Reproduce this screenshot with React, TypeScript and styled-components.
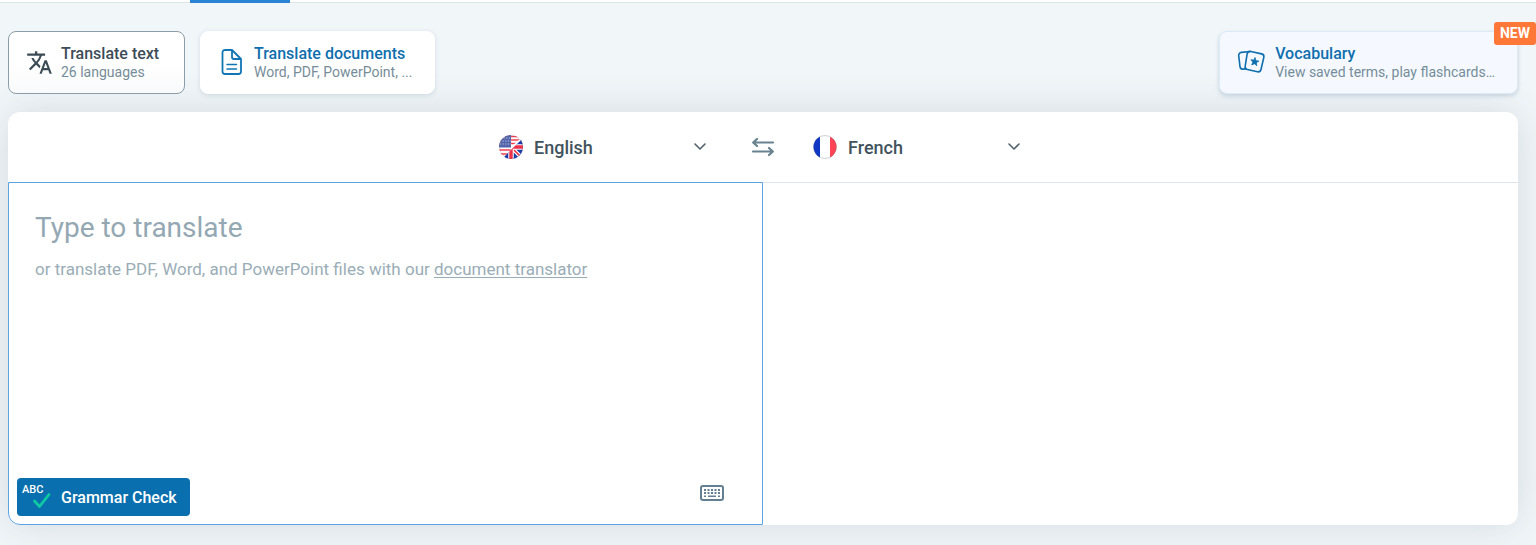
import React from "react";
import styled, { createGlobalStyle, css } from "styled-components";

const GlobalStyle = createGlobalStyle`
  *, *::before, *::after { box-sizing: border-box; }
  body {
    margin: 0;
    background: #f1f6f9;
    color: #3a4b54;
    font-family: Roboto, "Liberation Sans", sans-serif;
  }
  button, select, textarea { font: inherit; color: inherit; margin: 0; }
`;

const Page = styled.div`
  min-height: 100vh;
  overflow: hidden;
`;

const TopBar = styled.header`
  height: 3px;
  background: #fff;
  border-bottom: 1px solid #dde5e9;
  padding-left: 190px;
`;

const ActiveMark = styled.div`
  width: 100px;
  height: 3px;
  background: #2b83d6;
`;

const Main = styled.main`
  padding: 28px 18px 20px 8px;
`;

const Modes = styled.nav`
  position: relative;
  z-index: 1;
  display: flex;
  gap: 15px;
  margin-bottom: 18px;
`;

type Tone = "active" | "plain" | "tinted";

const ModeCard = styled.button<{ $tone: Tone }>`
  position: relative;
  display: flex;
  align-items: center;
  min-width: 177px;
  height: 63px;
  padding: 0 22px 0 17px;
  gap: 8px;
  border: 1px solid #fff;
  border-radius: 8px;
  background: #fff;
  text-align: left;
  cursor: pointer;
  box-shadow: 0 1px 5px rgba(60, 90, 110, 0.16);

  ${({ $tone }) =>
    $tone === "active" &&
    css`
      border-color: #8b9da8;
      background: linear-gradient(#fff 50%, #f9fafb);
      box-shadow: none;
    `}
  ${({ $tone }) =>
    $tone === "tinted" &&
    css`
      margin-left: auto;
      border-color: #dbeaf5;
      background: #f5f9ff;
      box-shadow: 0 2px 4px rgba(60, 100, 130, 0.22);
    `}
`;

const ModeText = styled.span`
  display: flex;
  flex-direction: column;
  padding-bottom: 1px;
`;

const ModeTitle = styled.span<{ $dark?: boolean }>`
  font-size: 16px;
  line-height: 20px;
  font-weight: 500;
  color: ${({ $dark }) => ($dark ? "#3d4c57" : "#0f6fae")};
`;

const ModeNote = styled.span`
  font-size: 14px;
  line-height: 17px;
  color: #768d99;
`;

const Badge = styled.span`
  position: absolute;
  top: -10px;
  right: -19px;
  padding: 0 6px;
  border-radius: 3px;
  background: #ff7838;
  color: #fff;
  font-size: 14px;
  line-height: 23px;
  font-weight: 700;
`;

const Panel = styled.section`
  border-radius: 12px;
  background: #fff;
  box-shadow: 0 0 40px rgba(50, 70, 80, 0.15);
`;

const LanguageBar = styled.div`
  display: flex;
  align-items: center;
  justify-content: center;
  height: 70px;
`;

const Picker = styled.label`
  position: relative;
  display: flex;
  align-items: center;
  gap: 11px;
  width: 242px;
  padding: 0 14px;
`;

const LanguageSelect = styled.select`
  flex: 1;
  min-width: 0;
  height: 40px;
  padding: 0;
  border: 0;
  outline: 0;
  appearance: none;
  background: transparent;
  font-size: 18px;
  font-weight: 500;
  color: #42535d;
  cursor: pointer;
`;

const Chevron = styled.svg`
  position: absolute;
  right: 20px;
  top: 50%;
  margin-top: -8px;
  pointer-events: none;
`;

const SwapButton = styled.button`
  display: flex;
  justify-content: center;
  width: 72px;
  padding: 0;
  border: 0;
  background: none;
  cursor: pointer;
`;

const Panes = styled.div`
  display: grid;
  grid-template-columns: 1fr 1fr;
  min-height: 343px;
`;

const SourcePane = styled.div`
  display: flex;
  flex-direction: column;
  padding: 24px 38px 8px 26px;
  border: 1px solid #5ba3e2;
  border-bottom-left-radius: 12px;
`;

const TargetPane = styled.output`
  border-top: 1px solid #dde5ea;
`;

const SourceInput = styled.textarea`
  display: block;
  width: 100%;
  height: 42px;
  padding: 0;
  border: 0;
  outline: 0;
  resize: none;
  overflow: hidden;
  background: none;
  font-size: 28px;
  line-height: 42px;

  &::placeholder { color: #94a8b3; opacity: 1; }
`;

const Hint = styled.p`
  margin: 8px 0 0;
  font-size: 17px;
  line-height: 25px;
  color: #9aadb6;
`;

const HintLink = styled.a`
  color: inherit;
  text-decoration: underline;
  text-underline-offset: 2px;
  text-decoration-thickness: 1px;
`;

const PaneFooter = styled.div`
  display: flex;
  align-items: flex-start;
  justify-content: space-between;
  margin: auto 0 0 -18px;
`;

const GrammarButton = styled.button`
  display: flex;
  align-items: center;
  gap: 8px;
  height: 38px;
  padding: 0 13px 0 5px;
  border: 0;
  border-radius: 4px;
  background: #0a6fae;
  color: #fff;
  font-size: 16px;
  font-weight: 500;
  cursor: pointer;
`;

const AbcMark = styled.span`
  display: flex;
  flex-direction: column;
  width: 31px;
  height: 26px;
  font-size: 11px;
  line-height: 12px;
  font-weight: 500;
  text-align: left;

  svg { align-self: flex-end; margin: -5px 2px 0 0; }
`;

const IconButton = styled.button`
  display: flex;
  padding: 7px 0;
  border: 0;
  background: none;
  cursor: pointer;
`;

const TranslateIcon = () => (
  <svg width="27" height="28" viewBox="0 0 24 25" fill="#3a4b54" aria-hidden="true">
    <path d="m12.87 15.07-2.54-2.51.03-.03A17.52 17.52 0 0 0 14.07 6H17V4h-7V2H8v2H1v1.99h11.17C11.5 7.92 10.44 9.75 9 11.35 8.07 10.32 7.3 9.19 6.69 8h-2c.73 1.63 1.73 3.17 2.98 4.56l-5.09 5.02L4 19l5-5 3.11 3.11.76-2.04zM18.5 10h-2L12 22h2l1.12-3h4.75L21 22h2l-4.5-12zm-2.62 7 1.62-4.33L19.12 17h-3.24z" />
  </svg>
);

const DocumentIcon = () => (
  <svg width="28" height="28" viewBox="0 0 28 28" fill="none" stroke="#1276b4" strokeWidth="1.8" strokeLinecap="round" strokeLinejoin="round" aria-hidden="true">
    <path d="M14 1H7a2.5 2.5 0 0 0-2.500 2.500v19A2.5 2.5 0 0 0 7 25h13.500a2.5 2.5 0 0 0 2.500-2.500V10L14 1v7a2 2 0 0 0 2 2h7" />
    <path d="M9 15.500h9.500M9 20h9.500" strokeWidth="1.500" />
  </svg>
);

const CardsIcon = () => (
  <svg width="30" height="28" viewBox="0 0 30 28" fill="none" stroke="#0f6fae" strokeWidth="1.6" strokeLinejoin="round" strokeLinecap="round" aria-hidden="true">
    <path d="M13.800 2.500 24.600 4.900a3 3 0 0 1 2.200 3.600l-2.800 12a3 3 0 0 1-3.600 2.200l-10-2.200a3 3 0 0 1-2.200-3.600l2-12.200a3 3 0 0 1 3.600-2.200z" />
    <path d="M13.600 2.500 4.300 3.400a2.900 2.900 0 0 0-2.600 3.200l1.300 11a2.900 2.900 0 0 0 3.200 2.500l2.900-.2" />
    <path d="m18.100 8.800.8 2.900 3 .4-2.600 1.600.5 3-2.300-2-2.800 1.200 1.200-2.800-2-2.300 3 .2z" fill="#0f6fae" strokeWidth=".8" />
  </svg>
);

const EnglishFlag = () => (
  <svg width="24" height="24" viewBox="0 0 24 24" aria-hidden="true">
    <defs>
      <clipPath id="en-round"><circle cx="12" cy="12" r="12" /></clipPath>
      <clipPath id="en-uk"><path d="M24 3 3 24h21z" /></clipPath>
    </defs>
    <g clipPath="url(#en-round)">
      <path fill="#fff" d="M0 0h24v24H0z" />
      <path d="M0 1.500h24M0 5h24M0 8.500h24M0 15h24M0 19h24" stroke="#ef4050" strokeWidth="1.700" />
      <path fill="#5364ab" d="M0 0h12v12.500H0z" />
      <path d="M2 3h10M1 6h11M1 9h11" stroke="#b9c2e2" strokeWidth="1.100" strokeDasharray="1.200 1.400" />
      <path d="M24 1 12 12v3L24 4z" fill="#fff" />
      <g clipPath="url(#en-uk)">
        <path fill="#1a3bab" d="M0 0h24v24H0z" />
        <path d="M0 0l24 24M24 0 0 24" stroke="#fff" strokeWidth="4" />
        <path d="m12 12 10 10M24 0 0 24" stroke="#ef3048" strokeWidth="1.700" />
        <path d="M12 0v24M0 12h24" stroke="#fff" strokeWidth="5.500" />
        <path d="M12 0v24M0 12h24" stroke="#ef3048" strokeWidth="3.400" />
      </g>
    </g>
    <circle cx="12" cy="12" r="11.500" fill="none" stroke="#5c6b75" strokeOpacity=".2" />
  </svg>
);

const FrenchFlag = () => (
  <svg width="24" height="24" viewBox="0 0 24 24" aria-hidden="true">
    <clipPath id="fr-round"><circle cx="12" cy="12" r="11.500" /></clipPath>
    <g clipPath="url(#fr-round)">
      <path fill="#fff" d="M0 0h24v24H0z" />
      <path fill="#0f36c4" d="M0 0h7v24H0z" />
      <path fill="#ff4455" d="M17 0h7v24h-7z" />
    </g>
    <circle cx="12" cy="12" r="11.500" fill="none" stroke="#5c6b75" strokeOpacity=".3" />
  </svg>
);

const ChevronIcon = () => (
  <Chevron width="14" height="14" viewBox="0 0 14 14" fill="none" stroke="#50616b" strokeWidth="1.6" strokeLinecap="round" strokeLinejoin="round" aria-hidden="true">
    <path d="m2 5 5 5 5-5" />
  </Chevron>
);

const SwapIcon = () => (
  <svg width="24" height="20" viewBox="0 0 24 20" fill="none" stroke="#68828f" strokeWidth="2.2" strokeLinecap="round" strokeLinejoin="round" aria-hidden="true">
    <path d="M22 5.500H2.500M6 2 2.200 5.500 6 9M2 14.500h19.500M18 11l3.800 3.500L18 18" />
  </svg>
);

const KeyboardIcon = () => (
  <svg width="24" height="16" viewBox="0 0 24 16" fill="none" stroke="#648090" aria-hidden="true">
    <rect x="1" y="1" width="22" height="14" rx="2" strokeWidth="2" />
    <path d="M4 5h16M4 8h16" strokeWidth="1.800" strokeDasharray="2 1.500" />
    <path d="M4 11.200h2M8 11.200h8M18 11.200h2" strokeWidth="1.500" />
  </svg>
);

const CheckIcon = () => (
  <svg width="19" height="18" viewBox="0 0 19 18" fill="none" stroke="#0fc9a4" strokeWidth="2.8" strokeLinecap="round" strokeLinejoin="round" aria-hidden="true">
    <path d="m2.500 10 5 5.500L17 3.500" />
  </svg>
);

const languages = ["English", "French", "German", "Spanish", "Italian"];

function LanguagePicker({ value, name, flag }: { value: string; name: string; flag: React.ReactNode }) {
  return (
    <Picker>
      {flag}
      <LanguageSelect defaultValue={value} aria-label={name}>
        {languages.map((language) => (
          <option key={language}>{language}</option>
        ))}
      </LanguageSelect>
      <ChevronIcon />
    </Picker>
  );
}

export default function App() {
  return (
    <Page>
      <GlobalStyle />
      <TopBar>
        <ActiveMark />
      </TopBar>
      <Main>
        <Modes>
          <ModeCard type="button" $tone="active">
            <TranslateIcon />
            <ModeText>
              <ModeTitle $dark>Translate text</ModeTitle>
              <ModeNote>26 languages</ModeNote>
            </ModeText>
          </ModeCard>
          <ModeCard type="button" $tone="plain">
            <DocumentIcon />
            <ModeText>
              <ModeTitle>Translate documents</ModeTitle>
              <ModeNote>Word, PDF, PowerPoint, ...</ModeNote>
            </ModeText>
          </ModeCard>
          <ModeCard type="button" $tone="tinted">
            <CardsIcon />
            <ModeText>
              <ModeTitle>Vocabulary</ModeTitle>
              <ModeNote>View saved terms, play flashcards…</ModeNote>
            </ModeText>
            <Badge>NEW</Badge>
          </ModeCard>
        </Modes>
        <Panel>
          <LanguageBar>
            <LanguagePicker value="English" name="Source language" flag={<EnglishFlag />} />
            <SwapButton type="button" aria-label="Swap languages">
              <SwapIcon />
            </SwapButton>
            <LanguagePicker value="French" name="Target language" flag={<FrenchFlag />} />
          </LanguageBar>
          <Panes>
            <SourcePane>
              <SourceInput placeholder="Type to translate" aria-label="Text to translate" />
              <Hint>
                or translate PDF, Word, and PowerPoint files with our{" "}
                <HintLink href="#documents">document translator</HintLink>
              </Hint>
              <PaneFooter>
                <GrammarButton type="button">
                  <AbcMark>
                    ABC
                    <CheckIcon />
                  </AbcMark>
                  Grammar Check
                </GrammarButton>
                <IconButton type="button" aria-label="Virtual keyboard">
                  <KeyboardIcon />
                </IconButton>
              </PaneFooter>
            </SourcePane>
            <TargetPane aria-label="Translation" />
          </Panes>
        </Panel>
      </Main>
    </Page>
  );
}
